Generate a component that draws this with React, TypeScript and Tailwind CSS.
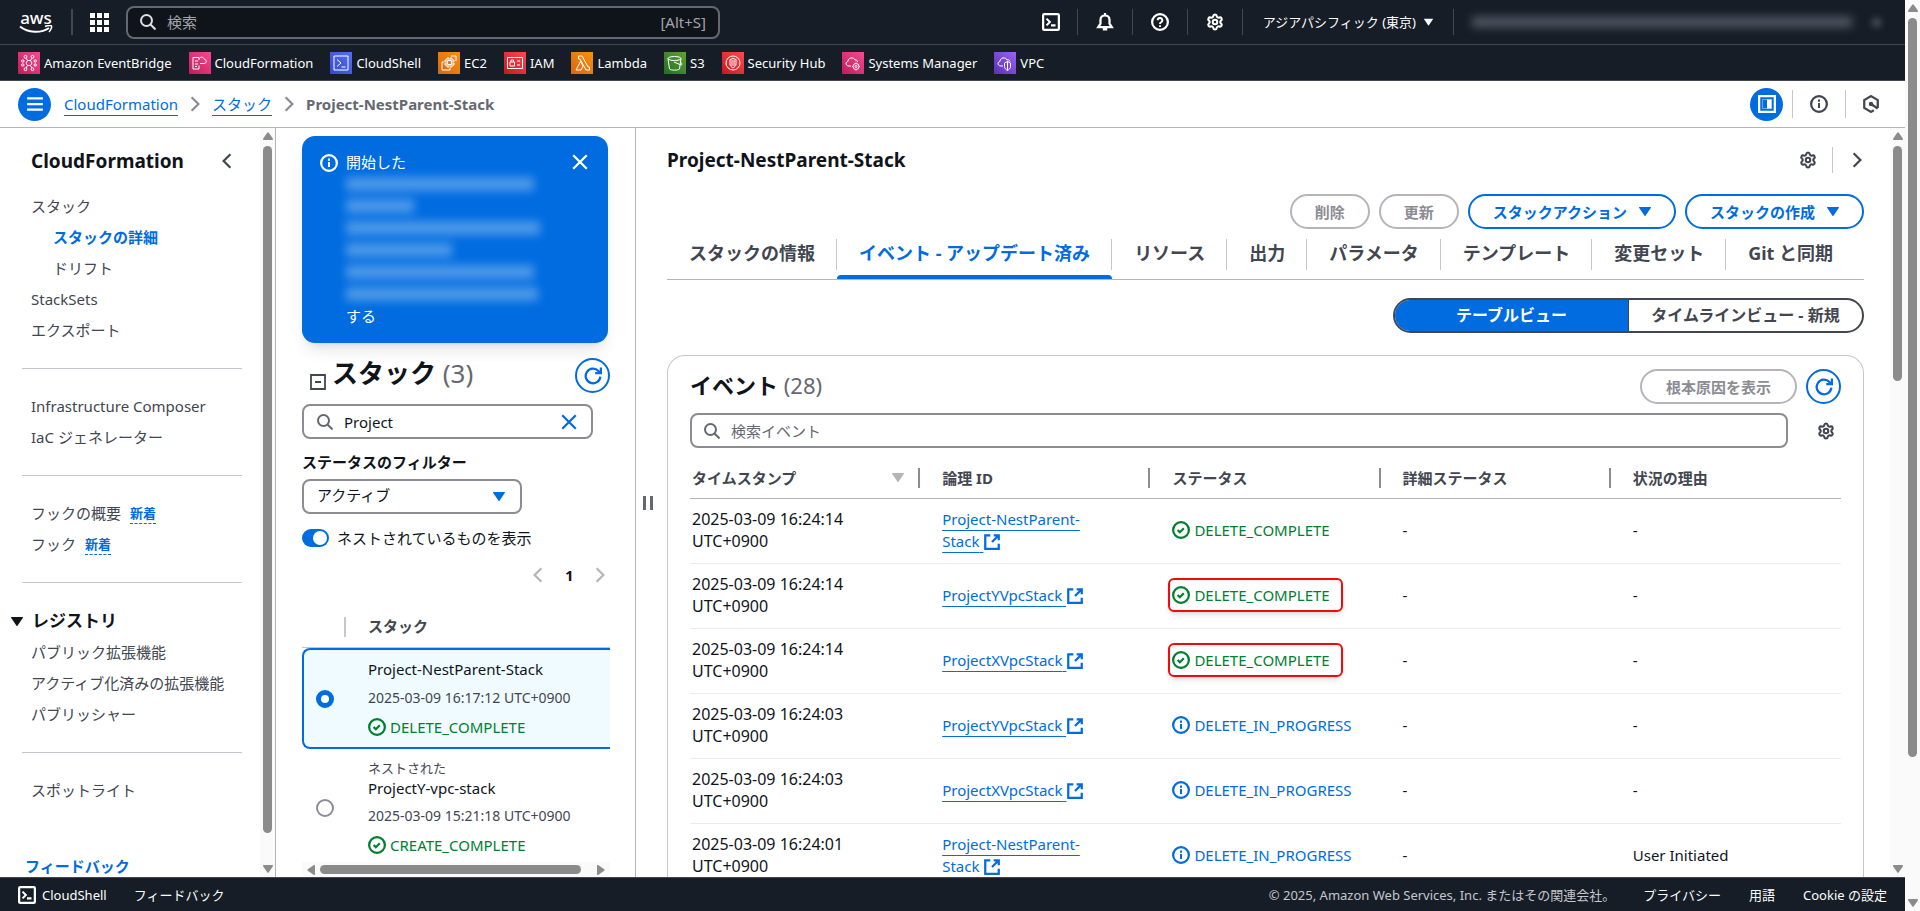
import { useState, type ReactNode } from 'react';
import clsx from 'clsx';
import { Settings } from 'lucide-react';

const services: { name: string; tile: string; icon: ReactNode }[] = [
  {
    name: 'Amazon EventBridge',
    tile: 'from-[#c2185b] to-[#f54a91]',
    icon: (
      <>
        <path d="M9.500 8.500h3l1.500 2.500-1.500 2.500h-3L8 11z" />
        <path d="M9.500 8.500 8 6M12.500 8.500 14 6M9.500 13.500 8 16M12.500 13.500 14 16" />
        <circle cx="7.500" cy="4.800" r="1.400" />
        <circle cx="14.500" cy="4.800" r="1.400" />
        <circle cx="7.500" cy="17.200" r="1.400" />
        <circle cx="14.500" cy="17.200" r="1.400" />
        <circle cx="4.800" cy="9" r="1.200" />
        <circle cx="17.200" cy="9" r="1.200" />
        <circle cx="4.800" cy="13" r="1.200" />
        <circle cx="17.200" cy="13" r="1.200" />
      </>
    ),
  },
  {
    name: 'CloudFormation',
    tile: 'from-[#c2185b] to-[#f54a91]',
    icon: <path d="M10 8V5.500H4V17h6v-3.500M6 9h3M6 12h3M6 14.500h2M10 7.500c.5-3 4.500-3 5-.5 3 .3 3 4.500 0 4.500h-4" />,
  },
  {
    name: 'CloudShell',
    tile: 'from-[#3b48cc] to-[#5170f5]',
    icon: <path d="M4 4h14v14H4zM7 7.500l4 3.500-4 3.500M11.500 15h4" />,
  },
  {
    name: 'EC2',
    tile: 'from-[#d86613] to-[#fa920a]',
    icon: <path d="M8 7h7v7H8zM9.500 8.500h4v4h-4zM10 7V5M13 7V5M10 16v-2M13 16v-2M15 9h2M15 12h2M8 9H6M8 12H6M13 4h5v5M6 10H4v8h8v-2" />,
  },
  {
    name: 'IAM',
    tile: 'from-[#c7131f] to-[#fb4a50]',
    icon: <path d="M3.500 5.500h15v11h-15zM6 10h4.500v4H6zM7 10V8h2.500v2M13 9h3M13 13h3" />,
  },
  {
    name: 'Lambda',
    tile: 'from-[#d86613] to-[#fa920a]',
    icon: <path d="M5 18l4.500-8.500L12 14l-2 4zM7.500 4H11l6 11h1.500v3H15L9 7H7.500z" />,
  },
  {
    name: 'S3',
    tile: 'from-[#1f6e22] to-[#60a337]',
    icon: (
      <>
        <ellipse cx="10.500" cy="6.500" rx="6.500" ry="2" />
        <path d="M4 6.500 5.500 17c1 1.500 9 1.500 10 0L17 6.500M10 10l7 3c1.500 0 1-2-.5-3" />
      </>
    ),
  },
  {
    name: 'Security Hub',
    tile: 'from-[#c7131f] to-[#fb4a50]',
    icon: (
      <>
        <circle cx="11" cy="11" r="7" />
        <path d="M8 7.500 11 6.500l3 1V12c0 2-1.500 3-3 4-1.500-1-3-2-3-4zM10 8v6M12 8v6" />
      </>
    ),
  },
  {
    name: 'Systems Manager',
    tile: 'from-[#c2185b] to-[#f54a91]',
    icon: (
      <>
        <path d="M9 14H7c-3.500 0-4-4-1-4.500 0-4 5.500-5 7-1.500 1.500-.5 2.500.5 2.500 2" />
        <circle cx="14" cy="14.500" r="3" />
        <circle cx="14" cy="14.500" r="1" />
        <path d="M14 10.500v1M14 17.500v1M10 14.500h1M17 14.500h1" />
      </>
    ),
  },
  {
    name: 'VPC',
    tile: 'from-[#5a30b5] to-[#9a64f5]',
    icon: <path d="M9 14H7c-3.500 0-4-4-1-4.500 0-4 5.500-5 7-1.500 1.500-.5 2.500 0 3 1.500M10.500 11l3-1.500 3 1.500v3.500c0 2-1.500 3-3 4-1.500-1-3-2-3-4zM13.500 9.500v9" />,
  },
];

const events = [
  { time: '2025-03-09 16:24:14', id: 'Project-NestParent-Stack', status: 'DELETE_COMPLETE', marked: false, reason: '-' },
  { time: '2025-03-09 16:24:14', id: 'ProjectYVpcStack', status: 'DELETE_COMPLETE', marked: true, reason: '-' },
  { time: '2025-03-09 16:24:14', id: 'ProjectXVpcStack', status: 'DELETE_COMPLETE', marked: true, reason: '-' },
  { time: '2025-03-09 16:24:03', id: 'ProjectYVpcStack', status: 'DELETE_IN_PROGRESS', marked: false, reason: '-' },
  { time: '2025-03-09 16:24:03', id: 'ProjectXVpcStack', status: 'DELETE_IN_PROGRESS', marked: false, reason: '-' },
  { time: '2025-03-09 16:24:01', id: 'Project-NestParent-Stack', status: 'DELETE_IN_PROGRESS', marked: false, reason: 'User Initiated' },
];

const tabs = ['スタックの情報', 'イベント - アップデート済み', 'リソース', '出力', 'パラメータ', 'テンプレート', '変更セット', 'Git と同期'];

const stacks = [
  { name: 'Project-NestParent-Stack', nested: false, time: '2025-03-09 16:17:12 UTC+0900', status: 'DELETE_COMPLETE' },
  { name: 'ProjectY-vpc-stack', nested: true, time: '2025-03-09 15:21:18 UTC+0900', status: 'CREATE_COMPLETE' },
];

function Icon({ children, className = 'size-[18px]' }: { children: ReactNode; className?: string }) {
  return (
    <svg viewBox="0 0 16 16" fill="none" stroke="currentColor" strokeWidth="2" className={clsx('shrink-0', className)} aria-hidden="true">
      {children}
    </svg>
  );
}

const SearchIcon = ({ className }: { className?: string }) => (
  <Icon className={className}>
    <circle cx="6.500" cy="6.500" r="5.500" />
    <path d="m10.500 10.500 5 5" />
  </Icon>
);

const CloseIcon = ({ className }: { className?: string }) => (
  <Icon className={className}>
    <path d="m2 2 12 12M14 2 2 14" />
  </Icon>
);

const ChevronIcon = ({ left, className }: { left?: boolean; className?: string }) => (
  <Icon className={className}>
    <path d={left ? 'M11 2 5 8l6 6' : 'm5 2 6 6-6 6'} />
  </Icon>
);

const InfoIcon = ({ className }: { className?: string }) => (
  <Icon className={className}>
    <circle cx="8" cy="8" r="7" />
    <path d="M8 7v4.500M8 4v2" strokeWidth="1.800" />
  </Icon>
);

const CheckIcon = ({ className }: { className?: string }) => (
  <Icon className={className}>
    <circle cx="8" cy="8" r="7" />
    <path d="m5 8 2 2 3.500-3.500" />
  </Icon>
);

const RefreshIcon = () => (
  <Icon>
    <path d="M14.500 8.500A6.500 6.500 0 1 1 12.800 3.600L14.500 5.500" />
    <path d="M10 5.500h5v-5" />
  </Icon>
);

const ShellIcon = () => (
  <Icon>
    <rect x="1" y="1" width="14" height="14" rx="1" />
    <path d="m4 5 3 3-3 3M8 11h4" strokeWidth="1.800" />
  </Icon>
);

const ExternalIcon = () => (
  <svg viewBox="0 0 16 16" fill="none" stroke="currentColor" strokeWidth="2" className="inline size-[18px] align-[-4px]" aria-hidden="true">
    <path d="M6.500 2H2v12h12V9.500M9.500 2H14v4.500M14 2 8 8" />
  </svg>
);

function Caret({ className = 'h-[9px] w-[12px]' }: { className?: string }) {
  return (
    <svg viewBox="0 0 12 9" fill="currentColor" className={clsx('shrink-0', className)} aria-hidden="true">
      <path d="M.5 0h11a.5.5 0 0 1 .4.8L6.500 8.700a.6.6 0 0 1-1 0L.1.8A.5.5 0 0 1 .5 0z" />
    </svg>
  );
}

function Status({ value }: { value: string }) {
  const done = value.endsWith('COMPLETE');
  return (
    <span className={clsx('flex items-center gap-1 whitespace-nowrap', done ? 'text-[#00802f]' : 'text-[#006ce0]')}>
      {done ? <CheckIcon /> : <InfoIcon />}
      {value}
    </span>
  );
}

function ScrollArrow({ className }: { className?: string }) {
  return (
    <svg viewBox="0 0 10 8" fill="#8b8b8b" className={clsx('h-[8px] w-[10px] shrink-0', className)} aria-hidden="true">
      <path d="M4.200.8 0.200 6.500A1 1 0 0 0 1 8h8a1 1 0 0 0 .8-1.500L5.800.8a1 1 0 0 0-1.600 0z" />
    </svg>
  );
}

function ScrollTrack({ ratio }: { ratio: number }) {
  return (
    <div className="flex w-[15px] shrink-0 flex-col items-center bg-[#fafafa] py-1" aria-hidden="true">
      <ScrollArrow />
      <div className="my-[6px] flex w-full flex-1 flex-col items-center">
        <div className="w-[9px] rounded-full bg-[#8b8b8b]" style={{ height: `${ratio * 100}%` }} />
      </div>
      <ScrollArrow className="rotate-180" />
    </div>
  );
}

function NavLink({ children, isNew }: { children: ReactNode; isNew?: boolean }) {
  return (
    <li className="flex h-[22px] items-center gap-[9px]">
      <a href="#">{children}</a>
      {isNew && (
        <a href="#" className="border-b border-dashed border-[#006ce0] text-[13px] leading-[20px] font-bold text-[#006ce0]">
          新着
        </a>
      )}
    </li>
  );
}

function TopBar() {
  const [query, setQuery] = useState('');
  return (
    <header className="shrink-0 bg-[#161d26] text-white">
      <div className="flex h-[45px] items-center border-b border-[#424650] pl-[19px]">
        <a href="#" aria-label="aws" className="flex w-[34px] flex-col items-center">
          <span className="text-[17px] leading-[14px] font-medium">aws</span>
          <svg viewBox="0 0 34 9" className="h-[9px] w-[34px]" fill="none" stroke="currentColor" aria-hidden="true">
            <path d="M1 1.500c8 6.500 21 7 29 1.500" strokeWidth="2" />
            <path d="M26 1.500c3-1.200 6-1.200 6.500-.5.5.9-.5 4-2.500 6" strokeWidth="1.500" />
          </svg>
        </a>
        <span className="mr-[17px] ml-[18px] h-[26px] w-[2px] bg-[#424650]" />
        <button type="button" aria-label="サービス" className="grid grid-cols-3 gap-[2px]">
          {Array.from({ length: 9 }, (_, i) => (
            <span key={i} className="size-[5px] bg-white" />
          ))}
        </button>
        <label className="ml-[17px] flex h-[33px] w-[594px] items-center rounded-lg border-2 border-[#656871] bg-[#0f141a] px-3 text-[15px]">
          <SearchIcon className="size-[16px] text-[#dedee3]" />
          <input
            value={query}
            onChange={(e) => setQuery(e.target.value)}
            placeholder="検索"
            aria-label="検索"
            className="ml-[11px] min-w-0 flex-1 outline-none placeholder:text-[#a4a4ad]"
          />
          <span className="text-[#a4a4ad]">[Alt+S]</span>
        </label>
        <div className="ml-auto flex items-center">
          <button type="button" aria-label="CloudShell" className="px-[17px]">
            <ShellIcon />
          </button>
          <button type="button" aria-label="通知" className="border-l border-[#424650] px-[18px] py-1">
            <Icon>
              <path d="M2 12.500h12l-2-3V6a4 4 0 0 0-8 0v3.500zM8 0v2M6 14.500h4" />
            </Icon>
          </button>
          <button type="button" aria-label="ヘルプ" className="border-l border-[#424650] px-[18px] py-1">
            <Icon>
              <circle cx="8" cy="8" r="7" />
              <path d="M6 6.500a2 2 0 1 1 2.800 1.800c-.6.3-.8.7-.8 1.500M8 10.800v1.700" strokeWidth="1.800" />
            </Icon>
          </button>
          <button type="button" aria-label="設定" className="border-l border-[#424650] px-[18px] py-1">
            <Settings size={18} strokeWidth={2.750} />
          </button>
          <button type="button" className="flex items-center gap-[8px] border-l border-[#424650] py-1 pr-[20px] pl-5 text-[13px] leading-[18px]">
            アジアパシフィック (東京)
            <Caret className="h-[8px] w-[9px]" />
          </button>
          <div className="flex items-center gap-5 border-l border-[#424650] py-2 pr-6 pl-[18px]">
            <span className="h-[10px] w-[380px] bg-[#555b66] blur-[5px]" />
            <span className="size-[9px] bg-[#454b56] blur-[3px]" />
          </div>
        </div>
      </div>
      <nav className="flex h-[36px] items-center gap-[17px] border-b border-[#424650] pl-[18px] text-[13px]">
        {services.map((s) => (
          <a key={s.name} href="#" className="flex items-center gap-1 whitespace-nowrap">
            <span className={clsx('size-[22px] bg-linear-to-tr', s.tile)}>
              <svg viewBox="0 0 22 22" fill="none" stroke="white" strokeWidth="1" className="size-[22px]" aria-hidden="true">
                {s.icon}
              </svg>
            </span>
            {s.name}
          </a>
        ))}
      </nav>
    </header>
  );
}

function Breadcrumbs() {
  return (
    <div className="flex h-[47px] shrink-0 items-center border-b border-[#b4b4bb] pr-[25px] pl-[18px]">
      <button type="button" aria-label="メニュー" className="flex size-[33px] items-center justify-center rounded-full bg-[#006ce0] text-white">
        <Icon>
          <path d="M1 3h14M1 8h14M1 13h14" />
        </Icon>
      </button>
      <nav className="ml-[13px] flex items-center gap-[8px]">
        <a href="#" className="border-b border-[#006ce0] text-[#006ce0]">CloudFormation</a>
        <ChevronIcon className="size-[18px] text-[#8c8c94]" />
        <a href="#" className="border-b border-[#006ce0] text-[#006ce0]">スタック</a>
        <ChevronIcon className="size-[18px] text-[#8c8c94]" />
        <span className="font-bold text-[#656871]">Project-NestParent-Stack</span>
      </nav>
      <div className="ml-auto flex items-center text-[#424650]">
        <button type="button" aria-label="分割パネル" className="mr-[9px] flex size-[33px] items-center justify-center rounded-full bg-[#006ce0] text-white">
          <Icon>
            <path d="M1 1h14v14H1z" />
            <path d="M4 4h8v8H4z" strokeWidth="1" strokeOpacity=".4" />
            <path d="M8 4h4v8H8z" fill="currentColor" stroke="none" />
          </Icon>
        </button>
        <button type="button" aria-label="情報" className="border-l border-[#c6c6cd] px-[17px] py-[5px]">
          <InfoIcon />
        </button>
        <button type="button" aria-label="診断" className="border-l border-[#c6c6cd] py-[5px] pl-4">
          <Icon>
            <path d="M10.500 13.500 8 15l-6-3.500v-7L8 1l6 3.500v7" />
            <circle cx="8" cy="8" r="2" fill="currentColor" stroke="none" />
            <path d="m8 8 6 4" />
          </Icon>
        </button>
      </div>
    </div>
  );
}

function Sidebar() {
  const divider = 'mt-[27px] mb-[26px] ml-[22px] w-[220px] border-[#c6c6cd]';
  const list = 'flex flex-col gap-[9px] pl-[31px]';
  return (
    <aside className="flex w-[276px] shrink-0 border-r border-[#b4b4bb]">
      <div className="min-w-0 flex-1 overflow-hidden text-[#424650]">
        <div className="flex items-center pt-5 pr-6 pb-[21px] pl-[31px]">
          <h2 className="flex-1 text-[19px] leading-[26px] font-bold text-[#0f141a]">CloudFormation</h2>
          <button type="button" aria-label="ナビゲーションを閉じる">
            <ChevronIcon left />
          </button>
        </div>
        <ul className={list}>
          <NavLink>スタック</NavLink>
          <li>
            <ul className="flex flex-col gap-[9px] pl-[22px]">
              <li>
                <a href="#" className="block font-bold text-[#006ce0]">スタックの詳細</a>
              </li>
              <NavLink>ドリフト</NavLink>
            </ul>
          </li>
          <NavLink>StackSets</NavLink>
          <NavLink>エクスポート</NavLink>
        </ul>
        <hr className={divider} />
        <ul className={list}>
          <NavLink>Infrastructure Composer</NavLink>
          <NavLink>IaC ジェネレーター</NavLink>
        </ul>
        <hr className={divider} />
        <ul className={list}>
          <NavLink isNew>フックの概要</NavLink>
          <NavLink isNew>フック</NavLink>
        </ul>
        <hr className={divider} />
        <button type="button" className="flex items-center gap-[9px] pb-2 pl-[11px] text-[17px] leading-[24px] font-bold text-[#0f141a]">
          <Caret />
          レジストリ
        </button>
        <ul className={list}>
          <NavLink>パブリック拡張機能</NavLink>
          <NavLink>アクティブ化済みの拡張機能</NavLink>
          <NavLink>パブリッシャー</NavLink>
        </ul>
        <hr className={divider} />
        <ul className={list}>
          <NavLink>スポットライト</NavLink>
        </ul>
        <a href="#" className="mt-[54px] ml-[25px] block font-bold text-[#006ce0]">フィードバック</a>
      </div>
      <ScrollTrack ratio={0.963} />
    </aside>
  );
}

function StackPanel() {
  const [query, setQuery] = useState('Project');
  const [selected, setSelected] = useState(0);
  return (
    <section className="flex w-[360px] shrink-0 flex-col border-r border-[#b4b4bb] pt-2 pr-[25px] pl-[26px]">
      <div className="flex w-[306px] shrink-0 items-start gap-2 rounded-[13px] bg-[#006ce0] pt-[15px] pr-[19px] pb-4 pl-[18px] text-white shadow-lg">
        <InfoIcon className="mt-[3px] size-[18px]" />
        <div className="flex-1">
          <p>開始した</p>
          <div className="flex h-[132px] flex-col justify-around opacity-30 blur-[5px]">
            <span className="h-[14px] w-[188px] bg-white" />
            <span className="h-[14px] w-[68px] bg-white" />
            <span className="h-[14px] w-[194px] bg-white" />
            <span className="h-[14px] w-[106px] bg-white" />
            <span className="h-[14px] w-[188px] bg-white" />
            <span className="h-[14px] w-[192px] bg-white" />
          </div>
          <p>する</p>
        </div>
        <button type="button" aria-label="閉じる" className="mt-[2px]">
          <CloseIcon />
        </button>
      </div>

      <div className="mt-[15px] flex h-[35px] items-center pl-2">
        <button type="button" aria-label="折りたたむ" className="mt-3 mr-[6px]">
          <Icon className="size-[16px] text-[#424650]">
            <path d="M1 1h14v14H1zM5 8h6" strokeWidth="1.800" />
          </Icon>
        </button>
        <h2 className="flex-1 pb-[6px] text-[26px] leading-[30px] font-bold text-[#0f141a]">
          スタック <span className="font-normal text-[#656871]">(3)</span>
        </h2>
        <button type="button" aria-label="更新" className="flex size-[35px] items-center justify-center rounded-full border-2 border-[#006ce0] text-[#006ce0]">
          <RefreshIcon />
        </button>
      </div>

      <div className="mt-[11px] flex h-[35px] w-[291px] shrink-0 items-center rounded-lg border-2 border-[#8c8c94] px-[13px]">
        <SearchIcon className="size-[16px] text-[#656871]" />
        <input
          value={query}
          onChange={(e) => setQuery(e.target.value)}
          aria-label="スタックを検索"
          className="ml-[11px] min-w-0 flex-1 text-[#0f141a] outline-none"
        />
        <button type="button" aria-label="クリア" onClick={() => setQuery('')} className="text-[#006ce0]">
          <CloseIcon />
        </button>
      </div>

      <label htmlFor="status" className="mt-3 font-bold text-[#0f141a]">ステータスのフィルター</label>
      <div className="relative mt-[6px] w-[220px]">
        <select id="status" className="h-[35px] w-full appearance-none rounded-lg border-2 border-[#8c8c94] bg-white px-[13px] pb-[3px] text-[#0f141a]">
          <option>アクティブ</option>
        </select>
        <Caret className="pointer-events-none absolute top-[13px] right-[17px] h-[9px] w-[12px] text-[#006ce0]" />
      </div>

      <label className="mt-[13px] flex items-center gap-2 text-[#0f141a]">
        <input
          type="checkbox"
          role="switch"
          defaultChecked
          className="flex h-[18px] w-[27px] appearance-none items-center rounded-full bg-[#8c8c94] px-[2px] before:size-[14px] before:rounded-full before:bg-white checked:justify-end checked:bg-[#006ce0]"
        />
        ネストされているものを表示
      </label>

      <div className="mt-[15px] flex items-center justify-end gap-[18px] pr-px text-[#b4b4bb]">
        <button type="button" aria-label="前のページ">
          <ChevronIcon left />
        </button>
        <button type="button" className="w-[8px] font-bold text-[#0f141a]">1</button>
        <button type="button" aria-label="次のページ">
          <ChevronIcon />
        </button>
      </div>

      <div className="mt-5 min-h-0 flex-1 overflow-hidden">
        <table className="w-full border-separate border-spacing-0 text-left">
          <thead>
            <tr className="h-[42px]">
              <th className="w-[44px] border-b border-[#c6c6cd] p-0">
                <span className="ml-auto block h-5 w-[2px] bg-[#c6c6cd]" />
              </th>
              <th className="border-b border-[#c6c6cd] p-0 pb-[2px] pl-[22px] text-[#424650]">スタック</th>
            </tr>
          </thead>
          <tbody>
            {stacks.map((s, i) => {
              const on = i === selected;
              const cell = on ? 'border-[#006ce0] bg-[#f0fbff]' : 'border-transparent';
              return (
                <tr key={s.name}>
                  <td className={clsx('rounded-l-lg border-y-2 border-l-2 pl-[12px] align-middle', cell)}>
                    <input
                      type="radio"
                      name="stack"
                      aria-label={s.name}
                      checked={on}
                      onChange={() => setSelected(i)}
                      className="block size-[18px] appearance-none rounded-full border-2 border-[#8c8c94] bg-white checked:border-[5px] checked:border-[#006ce0]"
                    />
                  </td>
                  <td className={clsx('border-y-2 pl-[22px]', cell, s.nested ? 'pt-[7px] pb-2' : 'pt-2 pb-[9px]')}>
                    <div className="flex flex-col gap-[7px]">
                      <div className={clsx('text-[#0f141a]', s.nested && 'leading-[20px]')}>
                        {s.nested && <div className="text-[13px] text-[#424650]">ネストされた</div>}
                        {s.name}
                      </div>
                      <div className="text-[14px] text-[#424650]">{s.time}</div>
                      <Status value={s.status} />
                    </div>
                  </td>
                </tr>
              );
            })}
          </tbody>
        </table>
      </div>
      <div className="flex h-[15px] shrink-0 items-center bg-[#fafafa] px-1" aria-hidden="true">
        <ScrollArrow className="-rotate-90" />
        <div className="mx-1 flex-1">
          <div className="h-[9px] w-[96%] rounded-full bg-[#8b8b8b]" />
        </div>
        <ScrollArrow className="rotate-90" />
      </div>
    </section>
  );
}

function Events() {
  const headers = ['タイムスタンプ', '論理 ID', 'ステータス', '詳細ステータス', '状況の理由'];
  return (
    <section className="mt-[22px] rounded-t-[18px] border border-b-0 border-[#c6c6cd] px-[22px] pt-[13px]">
      <div className="flex items-center">
        <h3 className="flex-1 pb-1 text-[22px] leading-[26px] font-bold text-[#0f141a]">
          イベント <span className="font-normal text-[#656871]">(28)</span>
        </h3>
        <button type="button" disabled className="h-[35px] rounded-full border-2 border-[#b4b4bb] px-6 font-bold text-[#8c8c94]">
          根本原因を表示
        </button>
        <button type="button" aria-label="更新" className="ml-[9px] flex size-[35px] items-center justify-center rounded-full border-2 border-[#006ce0] text-[#006ce0]">
          <RefreshIcon />
        </button>
      </div>
      <div className="mt-[9px] flex items-center">
        <label className="flex h-[35px] flex-1 items-center rounded-lg border-2 border-[#8c8c94] px-3">
          <SearchIcon className="size-[16px] text-[#656871]" />
          <input placeholder="検索イベント" aria-label="検索イベント" className="ml-[11px] min-w-0 flex-1 outline-none placeholder:text-[#656871]" />
        </label>
        <button type="button" aria-label="設定" className="mr-[6px] ml-[29px] text-[#424650]">
          <Settings size={18} strokeWidth={2.750} />
        </button>
      </div>
      <table className="mt-[9px] w-full table-fixed border-separate border-spacing-0 text-left text-[#0f141a]">
        <thead>
          <tr className="h-[42px]">
            {headers.map((h, i) => (
              <th key={h} className={clsx('border-b border-[#b4b4bb] p-0 text-[#424650]', i === 0 ? 'pl-[2px]' : 'pl-[22px]')}>
                <div className="flex h-5 items-center justify-between">
                  {h}
                  {i < 4 && (
                    <span className="flex items-center gap-[14px]">
                      {i === 0 && <Caret className="h-[9px] w-[12px] text-[#b4b4bb]" />}
                      <span className="h-5 w-[2px] bg-[#8c8c94]" />
                    </span>
                  )}
                </div>
              </th>
            ))}
          </tr>
        </thead>
        <tbody>
          {events.map((e, i) => (
            <tr key={i} className="h-[65px] [&>td]:border-b [&>td]:border-[#ebebf0] [&>td]:pt-[9px] [&>td]:pb-[11px] [&>td]:pl-[22px]">
              <td className="pl-[2px]! text-[16px] leading-[22px]">
                {e.time}
                <br />
                UTC+0900
              </td>
              <td>
                <div className="w-[160px]">
                  <a href="#" className="text-[#006ce0] underline decoration-1 underline-offset-[5px]">
                    {e.id}{' '}
                    <ExternalIcon />
                  </a>
                </div>
              </td>
              <td>
                <div className="relative w-fit">
                  <Status value={e.status} />
                  {e.marked && (
                    <span className="absolute -inset-y-[6px] -right-[13px] -left-1 rounded-md border-2 border-[#f00a0a] shadow-md inset-shadow-sm" />
                  )}
                </div>
              </td>
              <td>-</td>
              <td>{e.reason}</td>
            </tr>
          ))}
        </tbody>
      </table>
    </section>
  );
}

function Detail() {
  const [active, setActive] = useState(1);
  const pill = 'flex h-[35px] items-center gap-[12px] rounded-full border-2 px-[23px] font-bold';
  return (
    <main className="flex min-w-0 flex-1">
      <div className="flex w-[31px] shrink-0 items-center gap-[4px] pl-[7px]" aria-hidden="true">
        <span className="h-[14px] w-[3px] bg-[#656871]" />
        <span className="h-[14px] w-[3px] bg-[#656871]" />
      </div>
      <div className="min-w-0 flex-1 overflow-hidden pt-[19px] pr-[26px]">
        <div className="flex h-[26px] items-center text-[#424650]">
          <h1 className="flex-1 text-[19px] leading-[22px] font-bold text-[#0f141a]">Project-NestParent-Stack</h1>
          <button type="button" aria-label="設定">
            <Settings size={18} strokeWidth={2.750} />
          </button>
          <span className="mx-[15px] h-[26px] w-px bg-[#c6c6cd]" />
          <button type="button" aria-label="パネルを閉じる" className="-mr-[2px]">
            <ChevronIcon />
          </button>
        </div>
        <div className="mt-[21px] flex justify-end gap-[9px]">
          <button type="button" disabled className={clsx(pill, 'border-[#b4b4bb] text-[#8c8c94]')}>削除</button>
          <button type="button" disabled className={clsx(pill, 'border-[#b4b4bb] text-[#8c8c94]')}>更新</button>
          <button type="button" className={clsx(pill, 'border-[#006ce0] text-[#006ce0]')}>
            スタックアクション
            <Caret />
          </button>
          <button type="button" className={clsx(pill, 'border-[#006ce0] text-[#006ce0]')}>
            スタックの作成
            <Caret />
          </button>
        </div>
        <div role="tablist" className="flex h-[51px] border-b border-[#b4b4bb]">
          {tabs.map((tab, i) => (
            <button key={tab} type="button" role="tab" aria-selected={i === active} onClick={() => setActive(i)} className="flex flex-col pt-[10px]">
              <span
                className={clsx(
                  'h-[31px] pr-[21px] pl-[22px] text-[18px] leading-[28px] font-bold whitespace-nowrap',
                  i < tabs.length - 1 && 'border-r border-[#c6c6cd]',
                  i === active ? 'text-[#006ce0]' : 'text-[#424650]',
                )}
              >
                {tab}
              </span>
              {i === active && <span className="mt-auto h-1 w-full rounded-t-sm bg-[#006ce0]" />}
            </button>
          ))}
        </div>
        <div className="mt-[18px] ml-auto flex h-[35px] w-[471px] overflow-hidden rounded-full border-2 border-[#424650] text-[16px] leading-[22px] font-bold">
          <button type="button" className="flex-1 border-r border-[#424650] bg-[#006ce0] pb-[2px] text-white">テーブルビュー</button>
          <button type="button" className="flex-1 pb-[2px] text-[#424650]">タイムラインビュー - 新規</button>
        </div>
        <Events />
      </div>
      <ScrollTrack ratio={0.33} />
    </main>
  );
}

export default function App() {
  return (
    <div className="flex h-screen bg-white font-['Noto_Sans','Noto_Sans_CJK_JP',sans-serif] text-[15px] leading-[22px]">
      <div className="flex min-w-0 flex-1 flex-col">
        <TopBar />
        <Breadcrumbs />
        <div className="flex min-h-0 flex-1">
          <Sidebar />
          <StackPanel />
          <Detail />
        </div>
        <footer className="flex h-[34px] shrink-0 items-center border-t border-[#424650] bg-[#161d26] pr-[18px] pl-[18px] text-[13px] text-white">
          <button type="button" className="flex items-center gap-[6px]">
            <ShellIcon />
            CloudShell
          </button>
          <a href="#" className="ml-[27px]">フィードバック</a>
          <span className="ml-auto text-[#c6c6cd]">© 2025, Amazon Web Services, Inc. またはその関連会社。</span>
          <a href="#" className="ml-[28px]">プライバシー</a>
          <a href="#" className="ml-[28px]">用語</a>
          <a href="#" className="ml-[28px]">Cookie の設定</a>
        </footer>
      </div>
      <ScrollTrack ratio={0.845} />
    </div>
  );
}
